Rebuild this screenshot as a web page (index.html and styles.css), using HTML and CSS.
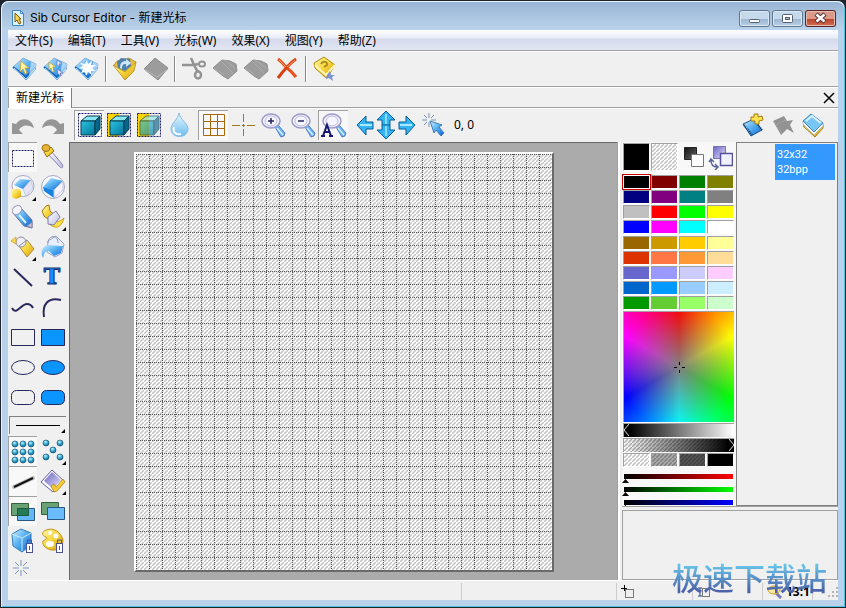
FILE: index.html
```html
<!DOCTYPE html>
<html lang="zh-CN">
<head>
    <meta charset="UTF-8">
    <title>Sib Cursor Editor</title>
    <link rel="stylesheet" href="styles.css">
</head>
<body>
<!-- shared gradients and symbols -->
<svg class="defs" aria-hidden="true">
    <defs>
        <linearGradient id="blue" x1="0" y1="0" x2="1" y2="1"><stop offset="0" stop-color="#d2efff"/><stop offset=".45" stop-color="#5db4f2"/><stop offset="1" stop-color="#0a63cf"/></linearGradient>
        <linearGradient id="gold" x1="0" y1="0" x2="1" y2="1"><stop offset="0" stop-color="#fff6a8"/><stop offset=".5" stop-color="#f7d53a"/><stop offset="1" stop-color="#d19a10"/></linearGradient>
        <linearGradient id="glass" x1="0" y1="0" x2="1" y2="1"><stop offset="0" stop-color="#ffffff"/><stop offset="1" stop-color="#bcbce0"/></linearGradient>
        <linearGradient id="teal" x1="0" y1="0" x2="1" y2="1"><stop offset="0" stop-color="#2bc4e0"/><stop offset="1" stop-color="#03749a"/></linearGradient>
        <linearGradient id="drop" x1="0" y1="0" x2="0" y2="1"><stop offset="0" stop-color="#eaf8ff"/><stop offset="1" stop-color="#6dbdee"/></linearGradient>
        <linearGradient id="dark" x1="0" y1="0" x2="1" y2="1"><stop offset="0" stop-color="#111"/><stop offset="1" stop-color="#666"/></linearGradient>
        <linearGradient id="violet" x1="0" y1="0" x2="1" y2="1"><stop offset="0" stop-color="#6a64c0"/><stop offset="1" stop-color="#e4e2ff"/></linearGradient>
        <radialGradient id="ball" cx=".4" cy=".3" r=".7"><stop offset="0" stop-color="#c4f4ff"/><stop offset=".5" stop-color="#3fb2d8"/><stop offset="1" stop-color="#07628a"/></radialGradient>
    </defs>
    <symbol id="gem" viewBox="0 0 26 26">
        <path d="M11 2l13 6-1 6-9 10L1 11z" fill="url(#blue)" stroke="#6d9cc4" stroke-width=".7"/>
        <path d="M1 11l13 10 9-9" fill="none" stroke="#1268c4" stroke-width="2"/>
        <path d="M2 12l12 11 9-10" fill="none" stroke="#a8d8f8"/>
        <path d="M19 6l5 2-1 6-6 6z" fill="#eaf8ff" opacity=".6"/>
    </symbol>
    <symbol id="gray-gem" viewBox="0 0 26 26">
        <path d="M12 2l13 10-10 12L1 13z" fill="#9c9c9c" stroke="#8c8c8c"/>
        <path d="M1 13l13 8 11-8" fill="none" stroke="#b8b8b8"/>
    </symbol>
    <symbol id="gray-stack" viewBox="0 0 26 26">
        <path d="M1 12L10 4l8 1 6 3 1 7-9 8-5-3z" fill="#9c9c9c" stroke="#8e8e8e"/>
        <path d="M12 4l11 8M2 12l10 7M9 5l12 12" fill="none" stroke="#adadad"/>
    </symbol>
    <symbol id="lens" viewBox="0 0 26 26">
        <path d="M15 15l3-2 7 8-1 3-3 1z" fill="#62b4f2" stroke="#5a7cc0"/>
        <path d="M17 16l6 7" stroke="#d8f0ff" stroke-width="1.5"/>
        <ellipse cx="11" cy="9" rx="9" ry="7" fill="#f5f5ff" stroke="#9c9bc8" stroke-width="1.5"/>
        <ellipse cx="11" cy="9" rx="6" ry="5" fill="none" stroke="#b8b8dc"/>
    </symbol>
    <symbol id="cube" viewBox="0 0 26 26">
        <path d="M4 9l6-5h13l-5 5z" fill="#8be6f2" stroke="#063a50"/>
        <path d="M4 9h14v14H4z" fill="url(#teal)" stroke="#063a50"/>
        <path d="M18 9l5-5v13l-5 6z" fill="#05668a" stroke="#063a50"/>
    </symbol>
</svg>

<div class="window">
    <header class="titlebar">
        <svg class="app-icon" width="16" height="18" viewBox="0 0 16 18"><path d="M2.500 1.500h8l3 3v12h-11z" fill="#dff3ff" stroke="#3c88c8"/><path d="M10.500 1.500v3h3" fill="none" stroke="#3c88c8"/><path d="M5 4l6 6H9l2 4-2 1-2-4-2 2z" fill="#f7d54a" stroke="#7a5c10"/></svg>
        <h1>Sib Cursor Editor - 新建光标</h1>
        <div class="window-buttons">
            <button class="win-btn" aria-label="最小化"><svg width="31" height="17"><rect x="10.500" y="9.500" width="10" height="3" rx="1" fill="#fff" stroke="#54606e"/></svg></button>
            <button class="win-btn" aria-label="最大化"><svg width="31" height="17"><rect x="10.500" y="4.500" width="10" height="8" rx="1" fill="#fff" stroke="#54606e"/><rect x="13.500" y="7.500" width="4" height="2" fill="#a8bcd4" stroke="#54606e"/></svg></button>
            <button class="win-btn close" aria-label="关闭"><svg width="31" height="17"><path d="M11 4l9 8M20 4l-9 8" stroke="#54343a" stroke-width="4.500"/><path d="M11.500 4.500l8 7M19.500 4.500l-8 7" stroke="#fff" stroke-width="2.500"/></svg></button>
        </div>
    </header>

    <nav class="menu">
        <button>文件(S)</button>
        <button>编辑(T)</button>
        <button>工具(V)</button>
        <button>光标(W)</button>
        <button>效果(X)</button>
        <button>视图(Y)</button>
        <button>帮助(Z)</button>
    </nav>

    <div class="toolbar main-toolbar">
        <button aria-label="新建光标"><svg viewBox="0 0 26 26"><use href="#gem"/><path d="M9 5l8 7h-4l2 5-2 1-2-5-3 3z" fill="#fff3a0" stroke="#c49a28" stroke-width=".7"/></svg></button>
        <button aria-label="新建动画光标"><svg viewBox="0 0 26 26"><use href="#gem"/><path d="M6 6l7 5h-3l1 5-2 0-1-4-2 2z" fill="#fff3a0" stroke="#c49a28" stroke-width=".7"/><path d="M14 4l5 4h-3l1 3-3-2zM14 13l6 4h-3l1 3-3-2z" fill="#eef" stroke="#6874bd" stroke-width=".7"/></svg></button>
        <button aria-label="新建图标库"><svg viewBox="0 0 26 26"><use href="#gem"/><path d="M13 4l1 4 4-3-1 4 5 0-4 3 3 3-4 0 1 4-4-3-2 4-1-4-4 1 2-4-4-1 4-2-3-3 5 1z" fill="#fff"/></svg></button>
        <span class="separator"></span>
        <button aria-label="打开"><svg viewBox="0 0 26 26"><path d="M2 9l3-4 12-3 7 4-3 10-8 8z" fill="#e8c13c" stroke="#a98428" stroke-width=".7"/><path d="M6 12L5 6l4-4 9 1 1 7-6 5z" fill="#4f7fae"/><path d="M8 12c0-5 2-7 6-7V3l5 4-5 4V8c-3 0-4 1-4 5z" fill="#cfe6fa"/><path d="M1 9l12 7L24 6l-2 9-9 9z" fill="url(#gold)" stroke="#b38c20" stroke-width=".7"/></svg></button>
        <button aria-label="保存"><svg viewBox="0 0 26 26"><use href="#gray-gem"/></svg></button>
        <span class="separator"></span>
        <button aria-label="剪切"><svg viewBox="0 0 26 26" fill="none" stroke="#939393"><path d="M1 9h12l4-1M10 2l4 9 3 5" stroke-width="2.500"/><ellipse cx="21" cy="8" rx="3" ry="2.500" stroke-width="2"/><ellipse cx="17" cy="19" rx="3" ry="3.500" stroke-width="2.500"/></svg></button>
        <button aria-label="复制"><svg viewBox="0 0 26 26"><use href="#gray-stack"/></svg></button>
        <button aria-label="粘贴"><svg viewBox="0 0 26 26"><use href="#gray-stack"/></svg></button>
        <button aria-label="删除"><svg viewBox="0 0 26 26"><path d="M4 3c4 3 6 6 9 9 4 3 6 5 9 9" fill="none" stroke="#e8501c" stroke-width="3"/><path d="M22 3C16 7 10 14 4 22" fill="none" stroke="#d84010" stroke-width="3"/><path d="M5 4l7 7M21 4l-8 7" stroke="#ff9c6c"/></svg></button>
        <span class="separator"></span>
        <button aria-label="帮助"><svg viewBox="0 0 26 26"><path d="M2 7l10-6 11 8-8 13-2-1L3 12z" fill="url(#gold)" stroke="#b58a12"/><path d="M3 9l11 10 9-10" fill="none" stroke="#fff7ba" stroke-width="2"/><path d="M9 8c2-4 7-2 6 1l-3 2" fill="none" stroke="#b08c24" stroke-width="2"/><path d="M18 15l1 4 4 0-3 2 1 4-4-3-3 1 1-4z" fill="#7791d4"/></svg></button>
    </div>

    <div class="tabs">
        <button class="tab">新建光标</button>
        <button class="tab-close" aria-label="关闭标签"><svg width="12" height="12"><path d="M1 1l10 10M11 1L1 11" stroke="#000" stroke-width="1.500"/></svg></button>
    </div>

    <div class="toolbar edit-toolbar">
        <button aria-label="撤销"><svg viewBox="0 0 26 26"><path d="M2 11v11h11l-4-4c3-5 8-6 15-2-2-9-12-12-18-4z" fill="#969696"/></svg></button>
        <button aria-label="重做"><svg viewBox="0 0 26 26"><path d="M24 11v11H13l4-4c-3-5-8-6-15-2 2-9 12-12 18-4z" fill="#969696"/></svg></button>
        <button class="pressed gap-before" aria-label="不透明"><svg viewBox="0 0 26 26"><use href="#cube"/><path d="M1.500 1.500h23v23h-23z" fill="none" stroke="#202070" stroke-dasharray="2 1"/></svg></button>
        <button aria-label="背景填充"><svg viewBox="0 0 26 26"><path d="M1 1h12v24H1z" fill="#ffd400"/><use href="#cube"/><path d="M1.500 1.500h23v23h-23z" fill="none" stroke="#202070" stroke-dasharray="2 1"/></svg></button>
        <button aria-label="半透明"><svg viewBox="0 0 26 26"><path d="M1 1h12v24H1z" fill="#ffd400"/><use href="#cube" opacity=".65"/><path d="M1.500 1.500h23v23h-23z" fill="none" stroke="#202070" stroke-dasharray="2 1"/></svg></button>
        <button aria-label="模糊"><svg viewBox="0 0 26 26"><path d="M13 1c1 7 9 10 9 16 0 10-17 10-17 0 0-6 7-9 8-16z" fill="url(#drop)" stroke="#85bde0"/><path d="M8 15c-2 6 3 8 7 7" fill="none" stroke="#fff" stroke-width="2"/></svg></button>
        <button class="pressed gap-small" aria-label="网格"><svg viewBox="0 0 26 26"><path d="M2.500 2.500h21v21h-21zM9.500 2v22M16.500 2v22M2 9.500h22M2 16.500h22" fill="none" stroke="#a8680c"/></svg></button>
        <button aria-label="中心线"><svg viewBox="0 0 26 26"><path d="M13.500 2v8M13.500 12v3M13.500 17v7M2 13.500h8M12 13.500h3M17 13.500h8" stroke="#a8741c"/></svg></button>
        <button aria-label="放大"><svg viewBox="0 0 26 26"><use href="#lens"/><path d="M11 6v6M8 9h6" stroke="#262660" stroke-width="1.500"/></svg></button>
        <button aria-label="缩小"><svg viewBox="0 0 26 26"><use href="#lens"/><path d="M8 9h6" stroke="#262660" stroke-width="1.500"/></svg></button>
        <button class="pressed" aria-label="自动缩放"><svg viewBox="0 0 26 26"><use href="#lens"/><path d="M2 24l4-11 4 11M3 20h6M0 24h4M8 24h4" fill="none" stroke="#161670" stroke-width="2"/></svg></button>
        <div class="arrows">
            <button class="arrow" aria-label="左移"><svg viewBox="0 0 18 28"><path d="M1 14l9-9v6h7v7h-7v6z" fill="#35b4f3" stroke="#075f9c"/><path d="M4 14h12" stroke="#a9e7ff" stroke-width="2"/></svg></button>
            <div class="arrow-pair">
                <button aria-label="上移"><svg viewBox="0 0 20 14"><path d="M10 0l9 9h-5v5H6V9H1z" fill="#35b4f3" stroke="#075f9c"/><path d="M10 3v10" stroke="#8adcff" stroke-width="2"/></svg></button>
                <button aria-label="下移"><svg viewBox="0 0 20 14"><path d="M10 14l9-9h-5V0H6v5H1z" fill="#35b4f3" stroke="#075f9c"/><path d="M10 1v10" stroke="#8adcff" stroke-width="2"/></svg></button>
            </div>
            <button class="arrow" aria-label="右移"><svg viewBox="0 0 18 28"><path d="M17 14l-9-9v6H1v7h7v6z" fill="#35b4f3" stroke="#075f9c"/><path d="M2 14h12" stroke="#a9e7ff" stroke-width="2"/></svg></button>
        </div>
        <button aria-label="热点"><svg viewBox="0 0 26 26"><path d="M8 1v5M8 10v5M1 8h5M10 8h5M3 3l3 3M13 3l-3 3M3 13l3-3" stroke="#7891bd"/><path d="M9 9l12 4-3 2 5 6-3 3-5-6-2 3z" fill="url(#blue)" stroke="#3d7fb9"/></svg></button>
        <output class="coords">0, 0</output>
        <div class="image-tools">
            <button aria-label="新建图像"><svg viewBox="0 0 26 26"><path d="M3 12l11-5 8 11-11 6z" fill="url(#blue)" stroke="#20558c"/><path d="M4 13l8 10M14 8l8 10" stroke="#17426e" stroke-width="2" stroke-dasharray="1 1"/><path d="M14 2h4l0 3 4-1 1 4-4 1 0 3-4 0 0-3-4 0 0-4 3 0z" fill="#ffe250" stroke="#a47a10"/></svg></button>
            <button aria-label="删除图像"><svg viewBox="0 0 26 26"><path d="M3 9l11-5 3 5 6-1-3 5 4 8-7-4-6 6z" fill="#929292"/><path d="M4 10l8 11M7 12l9-4" stroke="#b5b5b5" stroke-dasharray="1 1"/></svg></button>
            <button aria-label="图像列表"><svg viewBox="0 0 26 26"><path d="M3 14l12 11 8-9v-4z" fill="url(#gold)" stroke="#a87e14"/><path d="M3 9l11 11 9-9v3l-9 9L3 12z" fill="#fff" stroke="#8ba7bd" stroke-width=".7"/><path d="M3 9l8-7 12 9-9 9z" fill="#78c6f5" stroke="#4284b8"/><path d="M6 9l6-5 9 7" fill="none" stroke="#d3f1ff" stroke-width="2"/></svg></button>
        </div>
    </div>

    <main class="workspace">
        <aside class="tools">
            <div class="tool-grid">
                <button class="pressed" aria-label="选择"><svg viewBox="0 0 26 26"><path d="M2.500 5.500h21v16h-21z" fill="none" stroke="#22225c" stroke-dasharray="2 1"/></svg></button>
                <button aria-label="取色"><svg viewBox="0 0 26 26"><path d="M8 10l3-3 11 13c2 3 0 5-2 3z" fill="url(#glass)" stroke="#8383ae"/><path d="M4 8l7-5 3 4-7 6z" fill="url(#gold)" stroke="#996e14"/><ellipse cx="6" cy="4" rx="4" ry="3.500" fill="#e4b43b" stroke="#a37414"/></svg></button>
                <button class="more" aria-label="颜色替换"><svg viewBox="0 0 26 26"><ellipse cx="13" cy="12" rx="11" ry="10.500" fill="#f7f8ff" stroke="#a7a7c5"/><path d="M4 11l6-6 11 1-8 9z" fill="url(#blue)"/><path d="M13 15l8-9 2 8-7 8z" fill="#e4e5f6" stroke="#b8b9d4" stroke-width=".7"/><path d="M2 15h7l2 2v6l-5 2-4-2z" fill="url(#gold)"/></svg></button>
                <button class="more" aria-label="橡皮擦"><svg viewBox="0 0 26 26"><ellipse cx="13" cy="13" rx="11.500" ry="11.500" fill="#f7f8ff" stroke="#a7a7c5"/><path d="M3 13l8-9 12 3-9 9z" fill="url(#blue)"/><path d="M3 13l11 3v8L4 17z" fill="#1684df"/><path d="M14 16l9-9v9l-9 8z" fill="#f3f3ff" stroke="#c2c2dd"/></svg></button>
                <button aria-label="铅笔"><svg viewBox="0 0 26 26"><path d="M3 9l7-6 12 13v8l-8-2z" fill="url(#blue)" stroke="#70709c"/><path d="M17 22l5-4v6z" fill="#c9c4dc" stroke="#8585a8"/><ellipse cx="7" cy="6" rx="5" ry="4" transform="rotate(-40 7 6)" fill="#f5f5ff" stroke="#9494bd"/><path d="M9 11l7 8" stroke="#d8f3ff" stroke-width="2"/></svg></button>
                <button class="more" aria-label="画笔"><svg viewBox="0 0 26 26"><path d="M12 22c5 3 10 0 12-8-6 6-12 3-15 6z" fill="#ffe13f" stroke="#cda323"/><path d="M2 7l4-5 3-1 1 6 5 4-6 5-5-4z" fill="url(#gold)" stroke="#a47921"/><path d="M8 13l8-6 4 6-6 8-6-1z" fill="url(#glass)" stroke="#7e7eac"/></svg></button>
                <button class="more" aria-label="喷枪"><svg viewBox="0 0 26 26"><path d="M9 12l8-6 7 9-7 8z" fill="url(#gold)" stroke="#ae8c46"/><ellipse cx="11" cy="8" rx="5" ry="5" fill="#f0eef5" stroke="#9090aa"/><path d="M9 12l8-6" stroke="#9090aa"/><path d="M1 7l5-4v7z" fill="#ffd84b" stroke="#c79b20" stroke-width=".7"/></svg></button>
                <button aria-label="填充"><svg viewBox="0 0 26 26"><path d="M8 7l8-5 8 8-2 9-7 4-8-5z" fill="#e8efff" stroke="#9aa3c8"/><path d="M8 11l12 1 3 0-2 7-7 3-5-5c-5-1-5 5-6 7-3-5-1-12 5-13z" fill="url(#blue)"/><path d="M8 9c0-8 10-9 10 0" fill="none" stroke="#8d95c0"/></svg></button>
                <button aria-label="直线"><svg viewBox="0 0 26 26"><path d="M4 5l18 17" stroke="#28285c" stroke-width="2"/></svg></button>
                <button aria-label="文字"><svg viewBox="0 0 26 26"><text x="12" y="20" class="text-tool">T</text></svg></button>
                <button aria-label="曲线"><svg viewBox="0 0 26 26"><path d="M2 14c4 8 9-4 15-4 4 0 5 2 6 4" fill="none" stroke="#28285c" stroke-width="2"/></svg></button>
                <button aria-label="圆弧"><svg viewBox="0 0 26 26"><path d="M4 23C2 10 8 3 21 6" fill="none" stroke="#28285c" stroke-width="2"/></svg></button>
                <button aria-label="矩形"><svg viewBox="0 0 26 26"><path d="M1.500 5.500h23v16h-23z" fill="none" stroke="#28285c"/></svg></button>
                <button aria-label="实心矩形"><svg viewBox="0 0 26 26"><path d="M1.500 5.500h23v16h-23z" fill="#0a95ff" stroke="#28285c"/></svg></button>
                <button aria-label="椭圆"><svg viewBox="0 0 26 26"><ellipse cx="13" cy="13.500" rx="11.500" ry="7" fill="none" stroke="#28285c"/></svg></button>
                <button aria-label="实心椭圆"><svg viewBox="0 0 26 26"><ellipse cx="13" cy="13.500" rx="11.500" ry="7" fill="#0a95ff" stroke="#28285c"/></svg></button>
                <button aria-label="圆角矩形"><svg viewBox="0 0 26 26"><rect x="1.500" y="6.500" width="23" height="14" rx="5" fill="none" stroke="#28285c"/></svg></button>
                <button aria-label="实心圆角矩形"><svg viewBox="0 0 26 26"><rect x="1.500" y="6.500" width="23" height="14" rx="5" fill="#0a95ff" stroke="#28285c"/></svg></button>
            </div>
            <button class="line-width more" aria-label="线宽"><span></span></button>
            <div class="tool-grid options">
                <button class="pressed" aria-label="规则分布"><svg viewBox="0 0 26 26" fill="url(#ball)" stroke="#1a5878" stroke-width=".7"><circle cx="5" cy="5" r="3"/><circle cx="13" cy="5" r="3"/><circle cx="21" cy="5" r="3"/><circle cx="5" cy="13" r="3"/><circle cx="13" cy="13" r="3"/><circle cx="21" cy="13" r="3"/><circle cx="5" cy="21" r="3"/><circle cx="13" cy="21" r="3"/><circle cx="21" cy="21" r="3"/></svg></button>
                <button class="more" aria-label="随机分布"><svg viewBox="0 0 26 26" fill="url(#ball)" stroke="#1a5878" stroke-width=".7"><circle cx="6" cy="5" r="3"/><circle cx="20" cy="5" r="3"/><circle cx="13" cy="12" r="3"/><circle cx="6" cy="19" r="3"/><circle cx="20" cy="19" r="3"/></svg></button>
                <button class="pressed" aria-label="平滑"><svg viewBox="0 0 26 26"><path d="M4 18l19-9" stroke="#888" stroke-width="4" stroke-linecap="round" opacity=".5"/><path d="M4 18l19-9" stroke="#111" stroke-width="2"/></svg></button>
                <button class="more" aria-label="渐变"><svg viewBox="0 0 26 26"><path d="M1 14L12 2l12 11-11 11z" fill="#fff" stroke="#5e5a9c"/><path d="M4 13l8-9 9 8-8 9z" fill="url(#violet)"/><path d="M11 18l3-2 2 3 7-8 2 3-8 9-3 1z" fill="#f5cc35" stroke="#a27a10" stroke-width=".7"/></svg></button>
                <button class="pressed" aria-label="混合"><svg viewBox="0 0 26 26"><path d="M1.500 4.500h17v12h-17z" fill="#6ba273" stroke="#30633a"/><path d="M7.500 9.500h17v12h-17z" fill="#64b8f5" stroke="#285882"/><path d="M7.500 9.500h11v7h-11z" fill="#247b55" stroke="#1c5b43"/></svg></button>
                <button aria-label="覆盖"><svg viewBox="0 0 26 26"><path d="M1.500 4.500h17v12h-17z" fill="#6ba273" stroke="#30633a"/><path d="M7.500 9.500h17v12h-17z" fill="#6bbcfa" stroke="#285882"/></svg></button>
                <button aria-label="锁定透明度"><svg viewBox="0 0 26 26"><path d="M2 6l9-5 10 4v12l-9 7-9-6z" fill="url(#blue)" stroke="#317fb8"/><path d="M2 6l10 4 9-5M12 10v13" fill="none" stroke="#c8ebff"/><rect x="16.500" y="15.500" width="6" height="9" fill="#fff" stroke="#4c5294"/><path d="M17.500 15v-3h4v3M19.500 18v4" fill="none" stroke="#4c5294"/></svg></button>
                <button aria-label="锁定颜色"><svg viewBox="0 0 26 26"><path d="M6 2c8-3 15 2 17 10 0 6-4 11-12 10C4 20 2 16 3 13c2-2 5-1 3-4-4-1-5-5 0-7z" fill="url(#gold)" stroke="#c49420"/><circle cx="10" cy="5" r="2" fill="#fff"/><circle cx="16" cy="8" r="2.500" fill="#fff"/><ellipse cx="10" cy="16" rx="4" ry="3" fill="#fff"/><rect x="16.500" y="15.500" width="6" height="9" fill="#fff" stroke="#4c5294"/><path d="M17.500 15v-3h4v3M19.500 18v4" fill="none" stroke="#4c5294"/></svg></button>
                <button aria-label="设置热点"><svg viewBox="0 0 26 26"><path d="M11 5v6M11 15v6M3 13h6M13 13h6M5 7l4 4M17 7l-4 4M5 19l4-4M17 19l-4-4" stroke="#7895cd"/></svg></button>
            </div>
        </aside>

        <section class="canvas-area">
            <div class="canvas"></div>
        </section>

        <aside class="side">
            <div class="side-top">
                <div class="palette">
                    <div class="current-colors">
                        <button class="swatch black" aria-label="前景色"></button>
                        <button class="swatch hatched" aria-label="背景色"></button>
                        <button class="plain" aria-label="默认颜色"><svg viewBox="0 0 26 26"><path d="M5.500 3.500h12v12h-12z" fill="url(#dark)" stroke="#222"/><path d="M12.500 10.500h12v12h-12z" fill="#fff" stroke="#777"/></svg></button>
                        <button class="plain" aria-label="交换颜色"><svg viewBox="0 0 26 26"><path d="M6.500 2.500h12v12h-12z" fill="url(#violet)" stroke="#7670b4"/><path d="M13.500 9.500h12v12h-12z" fill="#f0f0ff" stroke="#565298" stroke-width="1.500"/><path d="M4 16c0 5 2 7 6 7M2 18l2-3 3 3M8 20l3 3-3 3" fill="none" stroke="#58669c" stroke-width="1.500"/></svg></button>
                    </div>
                    <div class="swatches" id="basicColors"></div>
                    <div class="swatches" id="extraColors"></div>
                    <div class="wheel">
                        <svg width="11" height="11"><path d="M5.500 0v3M5.500 8v3M0 5.500h3M8 5.500h3" stroke="#000"/></svg>
                    </div>
                    <div class="bar brightness"><svg width="5" height="12"><path d="M5 0L0 6l5 6" fill="none" stroke="#ddd"/></svg></div>
                    <div class="bar opacity"><svg width="5" height="12"><path d="M0 0l5 6-5 6" fill="none" stroke="#ddd"/></svg></div>
                    <div class="swatches">
                        <button class="swatch hatched" aria-label="0%"></button>
                        <button class="swatch hatched third" aria-label="33%"></button>
                        <button class="swatch hatched two-thirds" aria-label="66%"></button>
                        <button class="swatch black" aria-label="100%"></button>
                    </div>
                    <div class="channels">
                        <input class="red" type="range" min="0" max="255" value="0" aria-label="红">
                        <input class="green" type="range" min="0" max="255" value="0" aria-label="绿">
                        <input class="blue" type="range" min="0" max="255" value="0" aria-label="蓝">
                    </div>
                </div>
                <div class="image-list">
                    <button class="image-item">32x32<br>32bpp</button>
                </div>
            </div>
            <div class="preview"></div>
        </aside>
    </main>

    <footer class="statusbar">
        <div class="cell hint"></div>
        <div class="cell message"></div>
        <div class="cell position"><svg width="14" height="14"><path d="M3.500 0v6M0 3.500h6" stroke="#000"/><path d="M4.500 4.500h8v8h-8z" fill="none" stroke="#000" stroke-dasharray="1 1"/></svg></div>
        <div class="cell size"><svg width="14" height="14"><path d="M1 3h4M3 3v8M1 11h4" stroke="#224a84"/><path d="M5.500 3.500h7v8h-7z" fill="none" stroke="#000" stroke-dasharray="1 1"/></svg></div>
        <div class="cell zoom"><svg width="16" height="14"><path d="M9 8l5 5" stroke="#7777bb" stroke-width="3"/><ellipse cx="7" cy="5" rx="6" ry="4" fill="#fae89c" stroke="#c49b26"/></svg><b>13:1</b></div>
        <div class="cell"><svg class="grip" width="10" height="10" fill="#b5b5b5"><path d="M8 0h2v2H8zM8 4h2v2H8zM8 8h2v2H8zM4 4h2v2H4zM4 8h2v2H4zM0 8h2v2H0z"/></svg></div>
    </footer>
    <div class="watermark">极速下载站</div>
</div>
<script src="script.js"></script>
</body>
</html>
```

FILE: styles.css
```css
* {
    box-sizing: border-box;
}
body {
    margin: 0;
    background: #20242c;
    font-family: "Noto Sans", "Noto Sans CJK SC", sans-serif;
    font-size: 12px;
    line-height: 16px;
    color: #000;
}
button {
    padding: 0;
    border: 0;
    background: none;
    font: inherit;
    color: inherit;
}
svg {
    display: block;
}
.defs {
    position: absolute;
    width: 0;
    height: 0;
}
.window {
    position: relative;
    display: flex;
    flex-direction: column;
    min-height: 100vh;
    padding: 0 7px 7px;
    border: 1px solid #20242c;
    border-radius: 8px 8px 0 0;
    background: #b9d1ea;
    background-clip: padding-box;
    box-shadow: inset 1px 1px #e8f2fb, inset -1px -1px #4cc4dc;
}

/* title bar */
.titlebar {
    display: flex;
    align-items: center;
    height: 29px;
    margin: 0 -6px;
    padding: 5px 8px 0;
    border-radius: 7px 7px 0 0;
    background: linear-gradient(#98b5d4, #bad2eb);
    box-shadow: inset 0 1px #e8f2fb;
}
.app-icon {
    margin-right: 4px;
}
.titlebar h1 {
    flex: 1;
    margin: 0;
    font-family: Inter, "Noto Sans CJK SC", sans-serif;
    font-size: 12px;
    font-weight: normal;
}
.window-buttons {
    display: flex;
    gap: 2px;
}
.win-btn {
    width: 31px;
    height: 17px;
    border-radius: 3px;
    background: linear-gradient(#c5d8ec 50%, #9cb5d0 50%, #bad0e7);
    box-shadow: inset 0 0 0 1px #5f7890, inset 0 0 0 2px #dce9f5;
}
.win-btn.close {
    background: linear-gradient(#dc9888 50%, #bc3f28 50%, #d2765c);
    box-shadow: inset 0 0 0 1px #54262a, inset 0 0 0 2px #eabcb0;
}

.menu {
    display: flex;
    gap: 15px;
    height: 21px;
    padding: 1px 7px 0;
    border-bottom: 1px solid #a0a0a0;
    background: linear-gradient(#fff, #e8ecf6 40%, #d5daec 45%, #e2e6f4);
}

/* toolbars */
.toolbar {
    display: flex;
    align-items: center;
    background: #f0f0f0;
}
.toolbar svg {
    width: 26px;
    height: 26px;
}
.main-toolbar {
    height: 36px;
    padding-left: 4px;
    gap: 5px;
    border-top: 1px solid #fff;
    border-bottom: 1px solid #a0a0a0;
}
.separator {
    width: 2px;
    height: 26px;
    border-left: 1px solid #888;
    border-right: 1px solid #fff;
}
.tabs {
    display: flex;
    justify-content: space-between;
    align-items: center;
    height: 21px;
    padding-right: 3px;
    border-top: 1px solid #fff;
    border-bottom: 1px solid #a0a0a0;
    background: #f0f0f0;
}
.tab {
    height: 20px;
    padding: 0 7px;
    border-left: 1px solid #a0a0a0;
    border-right: 1px solid #808080;
    background: #fff;
}
.edit-toolbar {
    height: 34px;
    padding-bottom: 2px;
    border-top: 1px solid #fff;
}
.edit-toolbar button {
    display: flex;
    justify-content: center;
    align-items: center;
    width: 30px;
    height: 30px;
}
.edit-toolbar .gap-before {
    margin-left: 6px;
}
.edit-toolbar .gap-small {
    margin-left: 4px;
}
.edit-toolbar .pressed,
.tool-grid .pressed {
    border-top: 1px solid #a0a0a0;
    border-left: 1px solid #a0a0a0;
    background: #f8f8f8;
}
.arrows {
    display: flex;
    align-items: center;
    gap: 1px;
    margin: 0 2px 0 7px;
}
.arrows .arrow {
    width: 20px;
}
.arrows .arrow svg {
    width: 18px;
    height: 28px;
}
.arrows .arrow-pair button,
.arrow-pair svg {
    width: 20px;
    height: 14px;
}
.coords {
    margin-left: 5px;
}
.image-tools {
    display: flex;
    margin-left: auto;
    padding-right: 10px;
}

/* work area */
.workspace {
    display: grid;
    grid-template-columns: 61px 1fr 221px;
    flex: 1;
    background: #f0f0f0;
}
.tool-grid {
    display: grid;
    grid-template-columns: 30px 30px;
    grid-auto-rows: 30px;
}
.tool-grid.options {
    grid-template-rows: repeat(4, 30px) 24px;
}
.tool-grid button {
    display: flex;
    justify-content: center;
    align-items: center;
    margin-right: 1px;
}
.tool-grid svg {
    width: 26px;
    height: 26px;
}
.more {
    position: relative;
}
.more::after {
    content: "";
    position: absolute;
    right: 1px;
    bottom: 1px;
    border-left: 4px solid transparent;
    border-bottom: 4px solid #000;
}
.text-tool {
    font: bold 22px "DejaVu Serif", serif;
    text-anchor: middle;
    fill: #0a95ff;
    stroke: #22306c;
}
.line-width {
    display: block;
    width: 57px;
    height: 18px;
    margin: 4px 1px 2px;
    padding: 0 6px;
    border-top: 1px solid #808080;
    border-left: 1px solid #808080;
}
.line-width span {
    display: block;
    height: 1px;
    background: #000;
}
.canvas-area {
    display: flex;
    justify-content: center;
    align-items: center;
    border-top: 1px solid #696969;
    border-left: 1px solid #696969;
    background: #ababab;
}
/* dotted 13px cells over diagonal hatching */
.canvas {
    width: 420px;
    height: 420px;
    border: 2px solid #fff;
    border-right-color: #696969;
    border-bottom-color: #696969;
    background:
        conic-gradient(from 270deg at 1px 1px, #555 90deg, transparent 90deg) 0 0 / 13px 2px,
        conic-gradient(from 270deg at 1px 1px, #555 90deg, transparent 90deg) 0 0 / 2px 13px,
        linear-gradient(135deg, #fff 32%, #c4c4c4 42% 58%, #fff 68%) 0 0 / 4px 4px;
}

/* right side */
.side {
    display: flex;
    flex-direction: column;
    gap: 3px;
    padding-left: 4px;
    border-left: 1px solid #a0a0a0;
    box-shadow: inset 2px 0 #fff;
}
.side-top {
    display: grid;
    grid-template-columns: 114px 1fr;
    height: 365px;
    border-bottom: 1px solid #a0a0a0;
}
.palette {
    padding: 1px 2px 0 1px;
    overflow: hidden;
    background: #f8f8f8;
}
.current-colors,
.swatches {
    display: grid;
    grid-template-columns: repeat(4, 1fr);
    gap: 1px;
    margin-bottom: 1px;
}
.current-colors {
    margin-bottom: 4px;
}
.current-colors button {
    height: 28px;
}
.plain svg {
    width: 26px;
    height: 26px;
}
.swatch {
    height: 14px;
    border: 1px solid;
    border-color: #a0a0a0 #fff #fff #a0a0a0;
}
#basicColors {
    margin-bottom: 2px;
}
.selected {
    outline: 1px solid #c00;
    border-color: #fff;
}
.black {
    background: #000;
}
.hatched {
    background: linear-gradient(135deg, #fff 32%, #c4c4c4 42% 58%, #fff 68%) 0 0 / 4px 4px;
}
.third {
    background-image: linear-gradient(135deg, #aaa 32%, #808080 42% 58%, #aaa 68%);
}
.two-thirds {
    background-image: linear-gradient(135deg, #555 32%, #404040 42% 58%, #555 68%);
}
.wheel {
    display: flex;
    justify-content: center;
    align-items: center;
    height: 111px;
    margin-bottom: 1px;
    border-top: 1px solid #a0a0a0;
    border-left: 1px solid #a0a0a0;
    background:
        radial-gradient(circle closest-side, #808080, rgba(128, 128, 128, 0) 110%),
        conic-gradient(#f00, #ff0 60deg, #0f0 120deg, #0ff 180deg, #00f 240deg, #f0f 300deg, #f00);
}
.bar {
    display: flex;
    height: 14px;
    margin-bottom: 1px;
    border-top: 1px solid #a0a0a0;
    border-left: 1px solid #a0a0a0;
}
.brightness {
    background: linear-gradient(90deg, #000 5%, #fff);
}
.opacity {
    justify-content: flex-end;
    background:
        linear-gradient(90deg, transparent, #000 95%),
        linear-gradient(135deg, #fff 32%, #b4b4b4 42% 58%, #fff 68%) 0 0 / 4px 4px;
}
.channels {
    display: flex;
    flex-direction: column;
    margin-top: 5px;
    padding-right: 1px;
}
.channels input {
    appearance: none;
    width: 100%;
    height: 13px;
    margin: 0;
    background: none;
}
.channels input::-webkit-slider-runnable-track {
    height: 13px;
    border: solid transparent;
    border-width: 2px 0 6px 1px;
    background-clip: padding-box;
}
.channels input::-webkit-slider-thumb {
    appearance: none;
    width: 7px;
    height: 4px;
    margin: 5px 0 0 -2px;
    background: #000;
    clip-path: polygon(50% 0, 100% 100%, 0 100%);
}
.red::-webkit-slider-runnable-track {
    background: linear-gradient(90deg, #000, #f00);
}
.green::-webkit-slider-runnable-track {
    background: linear-gradient(90deg, #000, #0f0);
}
.blue::-webkit-slider-runnable-track {
    background: linear-gradient(90deg, #000, #00f);
}
.image-list {
    display: flex;
    justify-content: flex-end;
    align-items: flex-start;
    padding: 1px 2px;
    border: 1px solid #808080;
}
.image-item {
    width: 60px;
    height: 36px;
    padding: 2px;
    background: #3399ff;
    color: #fff;
    font-family: Roboto, sans-serif;
    font-size: 11px;
    line-height: 15px;
    text-align: left;
}
.preview {
    flex: 1;
    border: 1px solid #a0a0a0;
}

.statusbar {
    display: flex;
    height: 20px;
    padding-top: 2px;
    border-top: 1px solid #fff;
    background: #f0f0f0;
}
.cell {
    display: flex;
    align-items: center;
    padding-left: 4px;
    border-right: 1px solid #ccc;
}
.hint {
    flex: 3;
}
.message {
    flex: 1;
}
.position {
    width: 76px;
}
.size {
    width: 70px;
}
.zoom {
    width: 50px;
    gap: 3px;
}
.cell:last-child {
    justify-content: flex-end;
    width: 25px;
    border: 0;
}

/* site mark over the lower right corner */
.watermark {
    position: absolute;
    right: 18px;
    bottom: 10px;
    font: 500 31px/40px "Noto Sans CJK SC", sans-serif;
    color: transparent;
    background: linear-gradient(#67c4e8 20%, #4b62a8 85%);
    background-clip: text;
    -webkit-background-clip: text;
}
```

FILE: script.js
```js
const basicColors = [
    '#000000', '#800000', '#008000', '#808000',
    '#000080', '#800080', '#008080', '#808080',
    '#c0c0c0', '#ff0000', '#00ff00', '#ffff00',
    '#0000ff', '#ff00ff', '#00ffff', '#ffffff'
];
const extraColors = [
    '#996600', '#cc9900', '#ffcc00', '#ffff99',
    '#dd3300', '#ff7744', '#ff9933', '#ffdd99',
    '#6666cc', '#9999ff', '#ccccff', '#ffccff',
    '#0066cc', '#0099ff', '#99ccff', '#cceeff',
    '#009900', '#66cc33', '#99ff66', '#ccffcc'
];

function addSwatches(id, colors) {
    const box = document.getElementById(id);
    colors.forEach(color => {
        const button = document.createElement('button');
        button.className = 'swatch';
        button.style.backgroundColor = color;
        button.setAttribute('aria-label', color);
        box.appendChild(button);
    });
}

addSwatches('basicColors', basicColors);
addSwatches('extraColors', extraColors);
document.querySelector('#basicColors .swatch').classList.add('selected');
```
